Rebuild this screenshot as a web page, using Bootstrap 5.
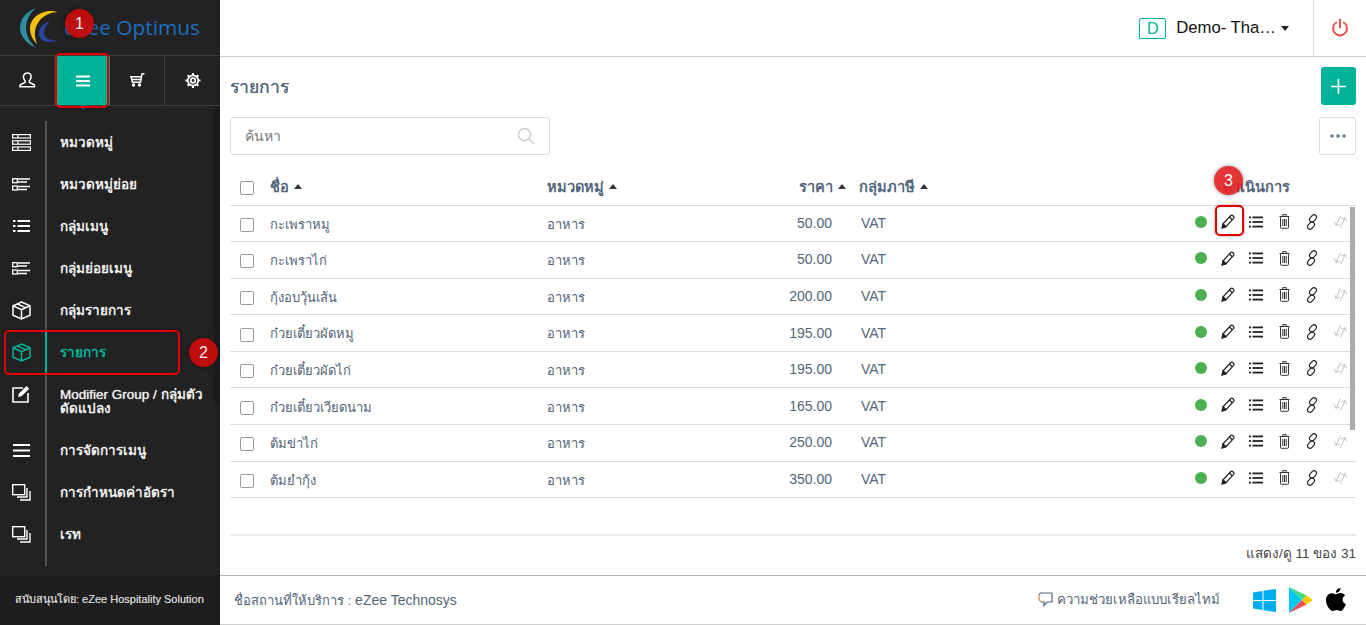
<!DOCTYPE html>
<html lang="th">
<head>
  <meta charset="UTF-8">
  <title>รายการ</title>
  <link href="https://cdn.jsdelivr.net/npm/bootstrap@5.3.0/dist/css/bootstrap.min.css" rel="stylesheet">
  <style>
    html, body { height: 100%; overflow: hidden; }
    body { font-family: "Liberation Sans", Arial, sans-serif; font-size: 14px; color: #54667a; background: #fff; }
    .app-shell { height: 625px; }
    .th-small { font-size: 13px; }
    /* sidebar */
    .side { width: 220px; background: #222; color: #fff; flex: none; }
    .logo-bar { height: 56px; border-bottom: 1px solid #3f3f3f; padding-left: 19px; }
    .logo-name { font-family: "Open Sans", "Liberation Sans", sans-serif; font-size: 20.8px; color: #1b6ec2; margin-left: 5px; }
    .side-tabs { height: 50px; border-bottom: 1px solid #3f3f3f; }
    .side-tab { width: 55px; border-right: 1px solid #3f3f3f; color: #fff; }
    .side-tab:last-child { border-right: 0; }
    .side-tab.on { background: #00b398; border-right: 0; position: relative; }
    .side-tab.on::after { content: ""; position: absolute; left: 50%; bottom: -5px; margin-left: -5px; border: 5px solid transparent; border-bottom: 0; border-top-color: #0b6f60; }
    .side-list { padding-top: 15px; height: 469px; }
    .side-item { height: 42px; color: #eee; font-weight: 700; font-size: 13.5px; line-height: 14px; }
    .side-item.tall { height: 56px; }
    .side-item.tall .side-ico { align-items: flex-start; padding-top: 12px; }
    .side-latin { font-weight: 400; text-shadow: 0 0 1px #eee; }
    .side-ico { width: 45px; flex: none; display: flex; align-items: center; justify-content: center; padding-right: 3px; }
    .side-txt { border-left: 2px solid #555; height: 100%; display: flex; align-items: center; padding: 2px 12px 0 13px; flex: 1; }
    .side-item.on { color: #00b398; }
    .side-item.on .side-txt { border-left-color: #00b398; }
    .side-end { height: 11px; margin-left: 45px; width: 2px; background: #555; }
    .side-track { position: absolute; left: 214px; top: 106px; width: 6px; height: 300px; background: #1b1b1b; }
    .powered { height: 50px; font-size: 11px; color: #ccc; background: #1e1e1e; padding: 0 0 2px 15px; text-shadow: 0 0 .5px #ccc; }
    .powered .th-small { font-size: 10.9px; }
    /* top */
    .topbar { height: 57px; border-bottom: 1px solid #c3ced8; flex: none; }
    .prop-badge { width: 27px; height: 21px; border: 1px solid #00b398; color: #00b398; font-size: 16px; border-radius: 2px; line-height: 19px; text-align: center; }
    .prop-name { color: #111; font-size: 16.7px; margin-left: 10px; }
    .prop-caret { margin-left: 5px; border-top: 5px solid #222; border-left: 4px solid transparent; border-right: 4px solid transparent; }
    .power-box { width: 53px; border-left: 1px solid #d5dde4; margin-left: 24px; height: 100%; }
    /* content */
    .work { padding: 0 10px; min-height: 0; }
    .title-row { height: 60px; padding-top: 10px; }
    .page-title { font-size: 17.6px; font-weight: 400; color: #54667a; margin: 0; padding-top: 10px; text-shadow: 0 0 .3px #54667a; }
    .add-btn { width: 35px; height: 38px; background: #00b398; border-radius: 3px; border: 0; }
    .search-row { height: 38px; }
    .search-box { width: 320px; height: 38px; border: 1px solid #d4dde4; border-radius: 3px; padding: 0 14px; color: #777; font-size: 14px; }
    .more-btn { width: 37px; height: 38px; border: 1px solid #d9dfe5; border-radius: 3px; background: #fff; color: #6c7f92; }
    .grid-wrap { margin-top: 13px; height: 368px; border-bottom: 2px solid #e8ecef; position: relative; }
    .tbl { width: 100%; table-layout: fixed; border-collapse: collapse; color: #54667a; }
    .tbl th { height: 37px; font-weight: 700; font-size: 14.6px; color: #54667a; border-bottom: 1px solid #d5dee5; padding: 3px 0 0; }
    .tbl td { height: 36.6px; border-bottom: 1px solid #d5dee5; padding: 0; font-size: 14px; }
    .tbl td.th-small { font-size: 13px; padding-top: 2px; }
    .col-check { width: 40px; padding-left: 10px !important; }
    .col-name { width: 277px; }
    .col-cat { width: 190px; }
    .col-price { width: 105px; text-align: right; }
    td.col-price { padding-right: 10px !important; }
    th.col-price { padding-right: 10px !important; }
    th.col-price .sort-up { margin-right: -14px; margin-left: 5px; }
    td.col-tax { padding-left: 19px; }
    th.col-tax { padding-left: 17px; }
    .col-act { width: 170px; text-align: right; }
    th.col-act { padding-right: 66px; }
    .box { display: block; width: 14px; height: 14px; border: 1.5px solid #9a9a9a; border-radius: 2px; margin-top: 3px; }
    th .box { margin-top: 0; }
    .sort-up { display: inline-block; border-bottom: 5px solid #333; border-left: 4px solid transparent; border-right: 4px solid transparent; margin-left: 5px; vertical-align: 3px; }
    .act-row { padding-right: 2px; padding-bottom: 3px; }
    .act-dot { width: 12px; height: 12px; background: #4caf50; border-radius: 50%; margin-right: 7px; }
    .act-ico { width: 28px; display: flex; justify-content: center; }
    .scroll-thumb { position: absolute; right: 1px; top: 39px; width: 5px; height: 223px; background: #ababab; }
    .count-row { height: 40px; font-size: 13.5px; color: #444; padding-bottom: 4px; }
    /* footer */
    .foot { height: 50px; flex: none; border-top: 1px solid #aeb8c1; border-bottom: 1px solid #cfcfcf; padding: 0 20px 0 14px; color: #54667a; }
    .help-link { color: #54667a; margin-right: 33px; font-size: 13.2px; }
    .store-icons { gap: 13px; }
    /* marks over the screenshot */
    .mark-box { position: absolute; border: 2px solid #e00000; border-radius: 5px; box-shadow: 0 0 3px rgba(0,0,0,.4); }
    .mark-num { position: absolute; width: 29px; height: 29px; border-radius: 50%; background: #cc0c0c; color: #fff; font-size: 16px; text-align: center; line-height: 29px; box-shadow: 0 0 4px rgba(0,0,0,.45); opacity: .92; }
    .box-a { left: 55px; top: 53px; width: 54px; height: 55px; }
    .num-a { left: 65px; top: 9px; }
    .box-b { left: 4px; top: 330px; width: 176px; height: 45px; }
    .num-b { left: 189px; top: 338px; }
    .box-c { left: 1215px; top: 205px; width: 29px; height: 31px; }
    .num-c { left: 1214px; top: 166px; background: #e22426; }
    svg { display: block; }
  </style>
</head>
<body>
<div class="app-shell d-flex position-relative">
  <aside class="side d-flex flex-column">
    <div class="logo-bar d-flex align-items-center">
      <svg width="40" height="40" viewBox="0 0 40 40">
        <path d="M17 0C6 4 1 12 1 20c0 8 7 16 16 20-6-6-10-13-10-20C7 12 11 5 17 0z" fill="#2f8ea1"/>
        <path d="M39 4C27 0 11 7 11 21c0 6 3 11 7 15-3-8-3-15 1-21 4-7 12-11 20-11z" fill="#f4c20d"/>
        <path d="M31 13c-7 2-12 8-11 14 1 7 11 9 19 5-7 1-14-1-14-7 0-5 3-9 6-12z" fill="#26479b"/>
      </svg>
      <span class="logo-name">eZee Optimus</span>
    </div>
    <div class="side-tabs d-flex">
      <div class="side-tab d-flex align-items-center justify-content-center">
        <svg width="17" height="17" viewBox="0 0 17 17" fill="none" stroke="#fff" stroke-width="1.5"><path d="M8.5 1c2.300 0 3.600 1.700 3.600 3.800 0 2-1 3.300-1.800 4.200v1.300l4.400 2.200c.5.3.8.7.8 1.200v1H1v-1c0-.5.3-.9.8-1.200l4.400-2.200V9C5.400 8.100 4.400 6.800 4.400 4.800 4.400 2.700 6.200 1 8.500 1z"/></svg>
      </div>
      <div class="side-tab on d-flex align-items-center justify-content-center">
        <svg width="14" height="12" viewBox="0 0 14 12" fill="#fff"><rect width="14" height="2" y="0.500"/><rect width="14" height="2" y="5"/><rect width="14" height="2" y="9.500"/></svg>
      </div>
      <div class="side-tab d-flex align-items-center justify-content-center">
        <svg width="16" height="15" viewBox="0 0 16 15" fill="none" stroke="#fff" stroke-width="1.500"><path d="M15.500 .8h-2.500l-1.500 8.500H3.500L2 3.800h11"/><path d="M3 6.500h9"/><circle cx="4.500" cy="12" r=".9"/><circle cx="10.500" cy="12" r=".9"/></svg>
      </div>
      <div class="side-tab d-flex align-items-center justify-content-center">
        <svg width="16" height="16" viewBox="0 0 16 16" fill="none" stroke="#fff" stroke-width="1.700"><circle cx="8" cy="7.500" r="2.300"/><circle cx="8" cy="7.500" r="5.200"/><path d="M8 0v2.300M8 12.700V15M.5 7.500h2.300M13.200 7.500h2.300M2.700 2.200l1.600 1.600M11.700 11.200l1.600 1.600M2.700 12.800l1.600-1.600M11.700 3.800l1.600-1.600" stroke-width="2"/></svg>
      </div>
    </div>
    <nav class="side-list">
      <div class="side-item d-flex"><div class="side-ico"><svg width="19" height="17" viewBox="0 0 19 17" fill="none" stroke="#fff" stroke-width="1.200"><rect x=".6" y=".6" width="17.800" height="3.400"/><rect x=".6" y="6.800" width="17.800" height="3.400"/><rect x=".6" y="13" width="17.800" height="3.400"/><path d="M6 .6V4M6 6.800v3.400M6 13v3.400"/></svg></div><div class="side-txt">หมวดหมู่</div></div>
      <div class="side-item d-flex"><div class="side-ico"><svg width="19" height="13" viewBox="0 0 19 13" fill="none" stroke="#fff" stroke-width="1.300"><rect x=".7" y=".7" width="4.600" height="4"/><rect x=".7" y="8" width="4.600" height="4"/><path d="M6 1h12M6 4h9M6 8.500h12M6 11.500h9"/></svg></div><div class="side-txt">หมวดหมู่ย่อย</div></div>
      <div class="side-item d-flex"><div class="side-ico"><svg width="17" height="12" viewBox="0 0 17 12" fill="#fff"><rect width="2.500" height="2"/><rect x="4.500" width="12.500" height="2"/><rect y="5" width="2.500" height="2"/><rect x="4.500" y="5" width="12.500" height="2"/><rect y="10" width="2.500" height="2"/><rect x="4.500" y="10" width="12.500" height="2"/></svg></div><div class="side-txt">กลุ่มเมนู</div></div>
      <div class="side-item d-flex"><div class="side-ico"><svg width="19" height="13" viewBox="0 0 19 13" fill="none" stroke="#fff" stroke-width="1.300"><rect x=".7" y=".7" width="4.600" height="4"/><rect x=".7" y="8" width="4.600" height="4"/><path d="M6 1h12M6 4h9M6 8.500h12M6 11.500h9"/></svg></div><div class="side-txt">กลุ่มย่อยเมนู</div></div>
      <div class="side-item d-flex"><div class="side-ico"><svg width="19" height="19" viewBox="0 0 19 19" fill="none" stroke="#fff" stroke-width="1.500"><path d="M9.500 1 18 4.800v9.400L9.500 18 1 14.200V4.800zM1 4.800 9.500 8.700 18 4.800M9.500 8.700V18M5.500 3l8.500 3.900"/></svg></div><div class="side-txt">กลุ่มรายการ</div></div>
      <div class="side-item on d-flex"><div class="side-ico"><svg width="19" height="19" viewBox="0 0 19 19" fill="none" stroke="#00b398" stroke-width="1.500"><path d="M9.500 1 18 4.800v9.400L9.500 18 1 14.200V4.800zM1 4.800 9.500 8.700 18 4.800M9.500 8.700V18M5.500 3l8.500 3.900"/></svg></div><div class="side-txt">รายการ</div></div>
      <div class="side-item tall d-flex"><div class="side-ico"><svg width="19" height="18" viewBox="0 0 19 18" fill="none" stroke="#fff" stroke-width="1.600"><path d="M11 3H1v14h15V8"/><path d="M6 12l1-3.500L14.500 1l2.700 2.700L9.500 11.300z" fill="#fff" stroke="none"/></svg></div><div class="side-txt"><span><span class="side-latin">Modifier Group /</span> กลุ่มตัวดัดแปลง</span></div></div>
      <div class="side-item d-flex"><div class="side-ico"><svg width="17" height="13" viewBox="0 0 17 13" fill="#fff"><rect width="17" height="2"/><rect y="5.500" width="17" height="2"/><rect y="11" width="17" height="2"/></svg></div><div class="side-txt">การจัดการเมนู</div></div>
      <div class="side-item d-flex"><div class="side-ico"><svg width="19" height="17" viewBox="0 0 19 17" fill="none" stroke="#fff" stroke-width="1.400"><rect x=".7" y=".7" width="12" height="10"/><path d="M15 4v9H5M18 7v9H8"/></svg></div><div class="side-txt">การกำหนดค่าอัตรา</div></div>
      <div class="side-item d-flex"><div class="side-ico"><svg width="19" height="17" viewBox="0 0 19 17" fill="none" stroke="#fff" stroke-width="1.400"><rect x=".7" y=".7" width="12" height="10"/><path d="M15 4v9H5M18 7v9H8"/></svg></div><div class="side-txt">เรท</div></div>
      <div class="side-end"></div>
    </nav>
    <div class="powered d-flex align-items-center"><span><span class="th-small">สนับสนุนโดย:</span> eZee Hospitality Solution</span></div>
  </aside>
  <div class="side-track"></div>

  <main class="flex-grow-1 d-flex flex-column">
    <header class="topbar d-flex align-items-center justify-content-end">
      <span class="prop-badge">D</span>
      <span class="prop-name">Demo- Tha…</span>
      <span class="prop-caret"></span>
      <div class="power-box d-flex align-items-center justify-content-center">
        <svg width="18" height="20" viewBox="0 0 18 20" fill="none" stroke="#ee5350" stroke-width="2" stroke-linecap="round"><path d="M9 1.500v8M5.200 4.500a7 7 0 1 0 7.600 0"/></svg>
      </div>
    </header>
    <section class="work flex-grow-1">
      <div class="title-row d-flex justify-content-between align-items-start">
        <h1 class="page-title">รายการ</h1>
        <button class="add-btn d-flex align-items-center justify-content-center" type="button">
          <svg width="15" height="15" viewBox="0 0 15 15" stroke="#fff" stroke-width="1.600"><path d="M7.500 0v15M0 7.500h15"/></svg>
        </button>
      </div>
      <div class="search-row d-flex justify-content-between">
        <div class="search-box d-flex align-items-center justify-content-between">
          <span>ค้นหา</span>
          <svg width="18" height="18" viewBox="0 0 18 18" fill="none" stroke="#c4c9cd" stroke-width="1.300"><circle cx="7.500" cy="7.500" r="6"/><path d="M12 12l5 5"/></svg>
        </div>
        <button class="more-btn d-flex align-items-center justify-content-center p-0" type="button">
          <svg width="16" height="4" viewBox="0 0 16 4" fill="#6c7f92"><circle cx="2" cy="2" r="1.800"/><circle cx="8" cy="2" r="1.800"/><circle cx="14" cy="2" r="1.800"/></svg>
        </button>
      </div>
      <div class="grid-wrap">
        <table class="tbl">
          <thead>
            <tr>
              <th class="col-check"><span class="box"></span></th>
              <th class="col-name">ชื่อ<span class="sort-up"></span></th>
              <th class="col-cat">หมวดหมู่<span class="sort-up"></span></th>
              <th class="col-price">ราคา<span class="sort-up"></span></th>
              <th class="col-tax">กลุ่มภาษี<span class="sort-up"></span></th>
              <th class="col-act">ดำเนินการ</th>
            </tr>
          </thead>
          <tbody id="rows"></tbody>
        </table>
        <div class="scroll-thumb"></div>
      </div>
      <div class="count-row d-flex align-items-center justify-content-end">แสดง/ดู 11 ของ 31</div>
    </section>
    <footer class="foot d-flex align-items-center">
      <span class="flex-grow-1"><span class="th-small">ชื่อสถานที่ให้บริการ :</span> eZee Technosys</span>
      <span class="help-link d-flex align-items-center gap-1">
        <svg width="15" height="15" viewBox="0 0 15 15" fill="none" stroke="#54667a" stroke-width="1.200"><path d="M1 2.500 2.500 1h11L14 2v8h-5l-3 3.500V10H3"/><path d="M1 2.500V7.500L3 10" stroke="#c9843f"/></svg>
        ความช่วยเหลือแบบเรียลไทม์
      </span>
      <span class="store-icons d-flex align-items-center">
        <svg width="23" height="23" viewBox="0 0 23 23" fill="#00adef"><path d="M0 3.500 9.500 2v9H0zM10.500 1.800 23 0v11H10.500zM0 12h9.500v9L0 19.500zM10.500 12H23v11l-12.500-1.800z"/></svg>
        <svg width="24" height="26" viewBox="0 0 24 26"><path d="M0 0v26l13-13z" fill="#00c8f5"/><path d="M0 0l13 13 4.500-4.500z" fill="#3ddc84"/><path d="M0 26l13-13 4.500 4.500z" fill="#ef4b54"/><path d="M17.500 8.500 13 13l4.500 4.500L24 13z" fill="#fdc70c"/></svg>
        <svg width="20" height="24" viewBox="0 0 20 24" fill="#000"><path d="M14.500 0c.1 2.600-2.100 4.900-4.600 4.700C9.700 2.300 12 .2 14.500 0zM10 6.300c1 0 2.700-1.300 4.700-1.200 1.800.1 3.400.9 4.300 2.300-3.600 2.200-3 7.200.9 8.700-.8 2.300-3 6.900-5.300 6.900-1.500 0-2.300-1-3.900-1-1.700 0-2.600 1-4 1C4.200 23 0 17.500 0 12.300 0 8 2.700 5.300 5.500 5.200c1.700-.1 3.500 1.100 4.500 1.100z"/></svg>
      </span>
    </footer>
  </main>

  <!-- help callouts drawn on the screenshot -->
  <div class="mark-box box-a"></div>
  <div class="mark-num num-a">1</div>
  <div class="mark-box box-b"></div>
  <div class="mark-num num-b">2</div>
  <div class="mark-box box-c"></div>
  <div class="mark-num num-c">3</div>
</div>
<script>
  const items = [
    ["กะเพราหมู", "50.00"], ["กะเพราไก่", "50.00"], ["กุ้งอบวุ้นเส้น", "200.00"],
    ["ก๋วยเตี๋ยวผัดหมู", "195.00"], ["ก๋วยเตี๋ยวผัดไก่", "195.00"], ["ก๋วยเตี๋ยวเวียดนาม", "165.00"],
    ["ต้มข่าไก่", "250.00"], ["ต้มยำกุ้ง", "350.00"]
  ];
  const actions = `<div class="act-row d-flex align-items-center justify-content-end">
    <span class="act-dot"></span>
    <span class="act-ico"><svg width="14" height="15" viewBox="0 0 14 15" fill="none" stroke="#222" stroke-width="1.200"><path d="M1.200 13.800l.9-4L9.800 1.500a1.300 1.300 0 0 1 1.900 0l.9 1a1.300 1.300 0 0 1 0 1.900L5 12.700z"/><path d="M8.500 3l3 3"/><path d="M1.200 13.800l.9-4 2.900 2.900z" fill="#222"/></svg></span>
    <span class="act-ico"><svg width="14" height="12" viewBox="0 0 14 12" fill="#222"><rect y=".5" width="2" height="1.800"/><rect x="3.500" y=".5" width="10.500" height="1.800"/><rect y="5.100" width="2" height="1.800"/><rect x="3.500" y="5.100" width="10.500" height="1.800"/><rect y="9.700" width="2" height="1.800"/><rect x="3.500" y="9.700" width="10.500" height="1.800"/></svg></span>
    <span class="act-ico"><svg width="11" height="15" viewBox="0 0 11 15" fill="none" stroke="#333" stroke-width="1"><path d="M.5 2.500h10M3.800 2.500V.6h3.400v1.900"/><rect x="1.500" y="2.500" width="8" height="11.800" rx="1"/><path d="M3.800 5v7M5.500 5v7M7.200 5v7"/></svg></span>
    <span class="act-ico"><svg width="12" height="16" viewBox="0 0 12 16" fill="none" stroke="#222" stroke-width="1.100"><rect x="-2.500" y="-5.500" width="5" height="8" rx="2.500" transform="translate(6 5.500) rotate(40)"/><rect x="-2.500" y="-2.500" width="5" height="8" rx="2.500" transform="translate(6 10.500) rotate(40)"/></svg></span>
    <span class="act-ico"><svg width="15" height="15" viewBox="0 0 15 15" fill="none" stroke="#c4c9cc" stroke-width="1"><path d="M10 13V2M7 5l3-3 3 3M5 2v11M2 10l3 3 3-3" transform="rotate(25 7.500 7.500)"/></svg></span>
  </div>`;
  document.getElementById("rows").innerHTML = items.map(([name, price]) => `
    <tr>
      <td class="col-check"><span class="box"></span></td>
      <td class="th-small">${name}</td>
      <td class="th-small">อาหาร</td>
      <td class="col-price">${price}</td>
      <td class="col-tax">VAT</td>
      <td>${actions}</td>
    </tr>`).join("");
</script>
<script src="https://cdn.jsdelivr.net/npm/bootstrap@5.3.0/dist/js/bootstrap.bundle.min.js"></script>
</body>
</html>
